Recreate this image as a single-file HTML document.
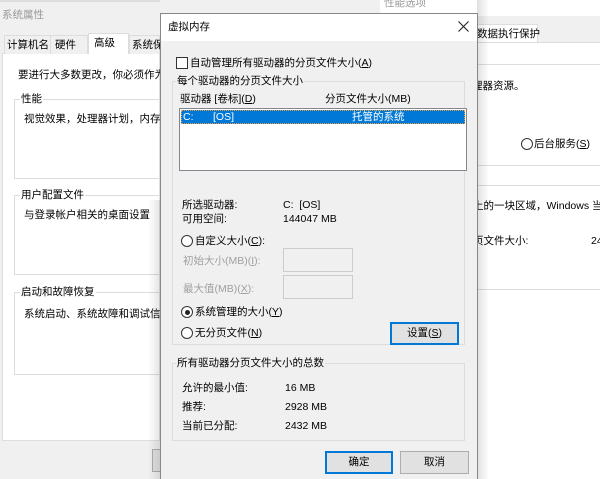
<!DOCTYPE html>
<html><head><meta charset="utf-8"><style>
*{margin:0;padding:0;box-sizing:border-box}
html,body{width:600px;height:479px;overflow:hidden}
body{background:#f0f0f0;position:relative;font-family:"Liberation Sans","Noto Sans CJK SC",sans-serif;font-size:10.5px;color:#000}
#w{position:absolute;left:0;top:0;width:600px;height:479px;overflow:hidden}
.a{position:absolute;white-space:nowrap;line-height:14px}
.g{color:#a0a0a0}
.box{position:absolute;border:1px solid #dcdcdc}
.rad{position:absolute;width:12px;height:12px;border:1px solid #333;border-radius:50%;background:#fff}
.btn{position:absolute;background:#e1e1e1;border:1px solid #adadad;text-align:center;line-height:20px}
</style></head><body><div id="w">
<div class="a g" style="left:2px;top:8px;color:#999">系统属性</div>
<div style="position:absolute;left:0;top:0;width:160px;height:2px;background:#ddd"></div>
<div style="position:absolute;left:2px;top:53px;width:158px;height:388px;background:#fff;border:1px solid #ddd"></div>
<div style="position:absolute;left:4px;top:35px;width:47px;height:19px;border:1px solid #ddd;border-bottom:none;background:#f0f0f0"></div>
<div class="a" style="left:7px;top:38px">计算机名</div>
<div style="position:absolute;left:50px;top:35px;width:38px;height:19px;border:1px solid #ddd;border-bottom:none;background:#f0f0f0"></div>
<div class="a" style="left:55px;top:38px">硬件</div>
<div style="position:absolute;left:88px;top:33px;width:41px;height:21px;border:1px solid #ddd;border-bottom:none;background:#fff"></div>
<div class="a" style="left:94px;top:36px">高级</div>
<div style="position:absolute;left:129px;top:35px;width:31px;height:19px;border:1px solid #ddd;border-bottom:none;background:#f0f0f0"></div>
<div class="a" style="left:132px;top:38px">系统保</div>
<div class="a" style="left:18px;top:68px">要进行大多数更改，你必须作为管</div>
<div class="box" style="left:14px;top:99px;width:150px;height:80px"></div>
<div class="a" style="left:20px;top:92px;background:#fff;padding:0 1px">性能</div>
<div class="a" style="left:24px;top:112px">视觉效果，处理器计划，内存使用</div>
<div class="box" style="left:14px;top:195px;width:150px;height:80px"></div>
<div class="a" style="left:20px;top:188px;background:#fff;padding:0 1px">用户配置文件</div>
<div class="a" style="left:24px;top:208px">与登录帐户相关的桌面设置</div>
<div class="box" style="left:14px;top:292px;width:150px;height:83px"></div>
<div class="a" style="left:20px;top:285px;background:#fff;padding:0 1px">启动和故障恢复</div>
<div class="a" style="left:24px;top:307px">系统启动、系统故障和调试信息</div>
<div style="position:absolute;left:152px;top:449px;width:10px;height:23px;border:1px solid #adadad;background:#e1e1e1"></div>
<div style="position:absolute;left:477px;top:0;width:123px;height:479px;background:#fff"></div>
<div style="position:absolute;left:380px;top:0;width:220px;height:16px;background:#fff"></div>
<div class="a" style="left:384px;top:-4px;color:#999">性能选项</div>
<div style="position:absolute;left:477px;top:16px;width:123px;height:26px;background:#f0f0f0"></div>
<div style="position:absolute;left:470px;top:24px;width:68px;height:19px;border:1px solid #ddd;border-bottom:none;background:#fff"></div>
<div class="a" style="left:477px;top:27px">数据执行保护</div>
<div style="position:absolute;left:477px;top:42px;width:123px;height:1px;background:#ddd"></div>
<div style="position:absolute;left:477px;top:64px;width:123px;height:1px;background:#ddd"></div>
<div class="a" style="left:472px;top:79px">理器资源。</div>
<div class="rad" style="left:521px;top:138px"></div>
<div class="a" style="left:534px;top:137px">后台服务(<u>S</u>)</div>
<div style="position:absolute;left:477px;top:165px;width:123px;height:1px;background:#ddd"></div>
<div style="position:absolute;left:477px;top:185px;width:123px;height:1px;background:#ddd"></div>
<div class="a" style="left:473px;top:199px">上的一块区域，Windows 当作</div>
<div class="a" style="left:473px;top:234px">页文件大小:</div>
<div class="a" style="left:591px;top:234px">24</div>
<div style="position:absolute;left:477px;top:289px;width:123px;height:1px;background:#ddd"></div>
<div style="position:absolute;left:477px;top:0;width:12px;height:479px;background:linear-gradient(to right,rgba(0,0,0,.12),rgba(0,0,0,0))"></div>
<div style="position:absolute;left:148px;top:200px;width:12px;height:279px;background:linear-gradient(to left,rgba(0,0,0,.10),rgba(0,0,0,0))"></div>
<div style="position:absolute;left:160px;top:13px;width:318px;height:470px;background:#f0f0f0;border:1px solid #888"></div>
<div style="position:absolute;left:161px;top:14px;width:316px;height:27px;background:#fff"></div>
<div class="a" style="left:168px;top:20px">虚拟内存</div>
<svg style="position:absolute;left:458px;top:21px" width="11" height="11"><path d="M0.5 0.5L10.5 10.5M10.5 0.5L0.5 10.5" stroke="#222" stroke-width="1.1"/></svg>
<div style="position:absolute;left:176px;top:57px;width:12px;height:12px;border:1px solid #333;background:#fff"></div>
<div class="a" style="left:190px;top:56px">自动管理所有驱动器的分页文件大小(<u>A</u>)</div>
<div class="box" style="left:172px;top:81px;width:293px;height:264px"></div>
<div class="a" style="left:176px;top:74px;background:#f0f0f0;padding:0 1px">每个驱动器的分页文件大小</div>
<div class="a" style="left:180px;top:92px">驱动器 [卷标](<u>D</u>)</div>
<div class="a" style="left:325px;top:92px">分页文件大小(MB)</div>
<div style="position:absolute;left:179px;top:108px;width:288px;height:63px;background:#fff;border:1px solid #828790"></div>
<div style="position:absolute;left:181px;top:110px;width:284px;height:14px;background:#0078d7;outline:1px dotted #f0a040;outline-offset:-1px"></div>
<div class="a" style="left:183px;top:110px;color:#fff">C:</div>
<div class="a" style="left:213px;top:110px;color:#fff">[OS]</div>
<div class="a" style="left:352px;top:110px;color:#fff">托管的系统</div>
<div class="a" style="left:182px;top:198px">所选驱动器:</div>
<div class="a" style="left:283px;top:198px">C:&nbsp;&nbsp;[OS]</div>
<div class="a" style="left:182px;top:212px">可用空间:</div>
<div class="a" style="left:283px;top:212px">144047 MB</div>
<div class="rad" style="left:181px;top:235px"></div>
<div class="a" style="left:195px;top:234px">自定义大小(<u>C</u>):</div>
<div class="a g" style="left:183px;top:254px">初始大小(MB)(<u>I</u>):</div>
<div style="position:absolute;left:283px;top:248px;width:70px;height:24px;border:1px solid #ccc;background:#f0f0f0"></div>
<div class="a g" style="left:183px;top:282px">最大值(MB)(<u>X</u>):</div>
<div style="position:absolute;left:283px;top:275px;width:70px;height:24px;border:1px solid #ccc;background:#f0f0f0"></div>
<div class="rad" style="left:181px;top:306px"></div>
<div style="position:absolute;left:185px;top:310px;width:5px;height:5px;border-radius:50%;background:#222"></div>
<div class="a" style="left:195px;top:305px">系统管理的大小(<u>Y</u>)</div>
<div class="rad" style="left:181px;top:327px"></div>
<div class="a" style="left:195px;top:326px">无分页文件(<u>N</u>)</div>
<div class="btn" style="left:390px;top:322px;width:69px;height:23px;border:2px solid #0078d7;line-height:19px">设置(<u>S</u>)</div>
<div class="box" style="left:172px;top:363px;width:293px;height:78px"></div>
<div class="a" style="left:176px;top:356px;background:#f0f0f0;padding:0 1px">所有驱动器分页文件大小的总数</div>
<div class="a" style="left:182px;top:381px">允许的最小值:</div>
<div class="a" style="left:285px;top:381px">16 MB</div>
<div class="a" style="left:182px;top:400px">推荐:</div>
<div class="a" style="left:285px;top:400px">2928 MB</div>
<div class="a" style="left:182px;top:419px">当前已分配:</div>
<div class="a" style="left:285px;top:419px">2432 MB</div>
<div class="btn" style="left:325px;top:451px;width:68px;height:23px;border:2px solid #0078d7;line-height:19px">确定</div>
<div class="btn" style="left:400px;top:451px;width:69px;height:23px">取消</div>
</div></body></html>
